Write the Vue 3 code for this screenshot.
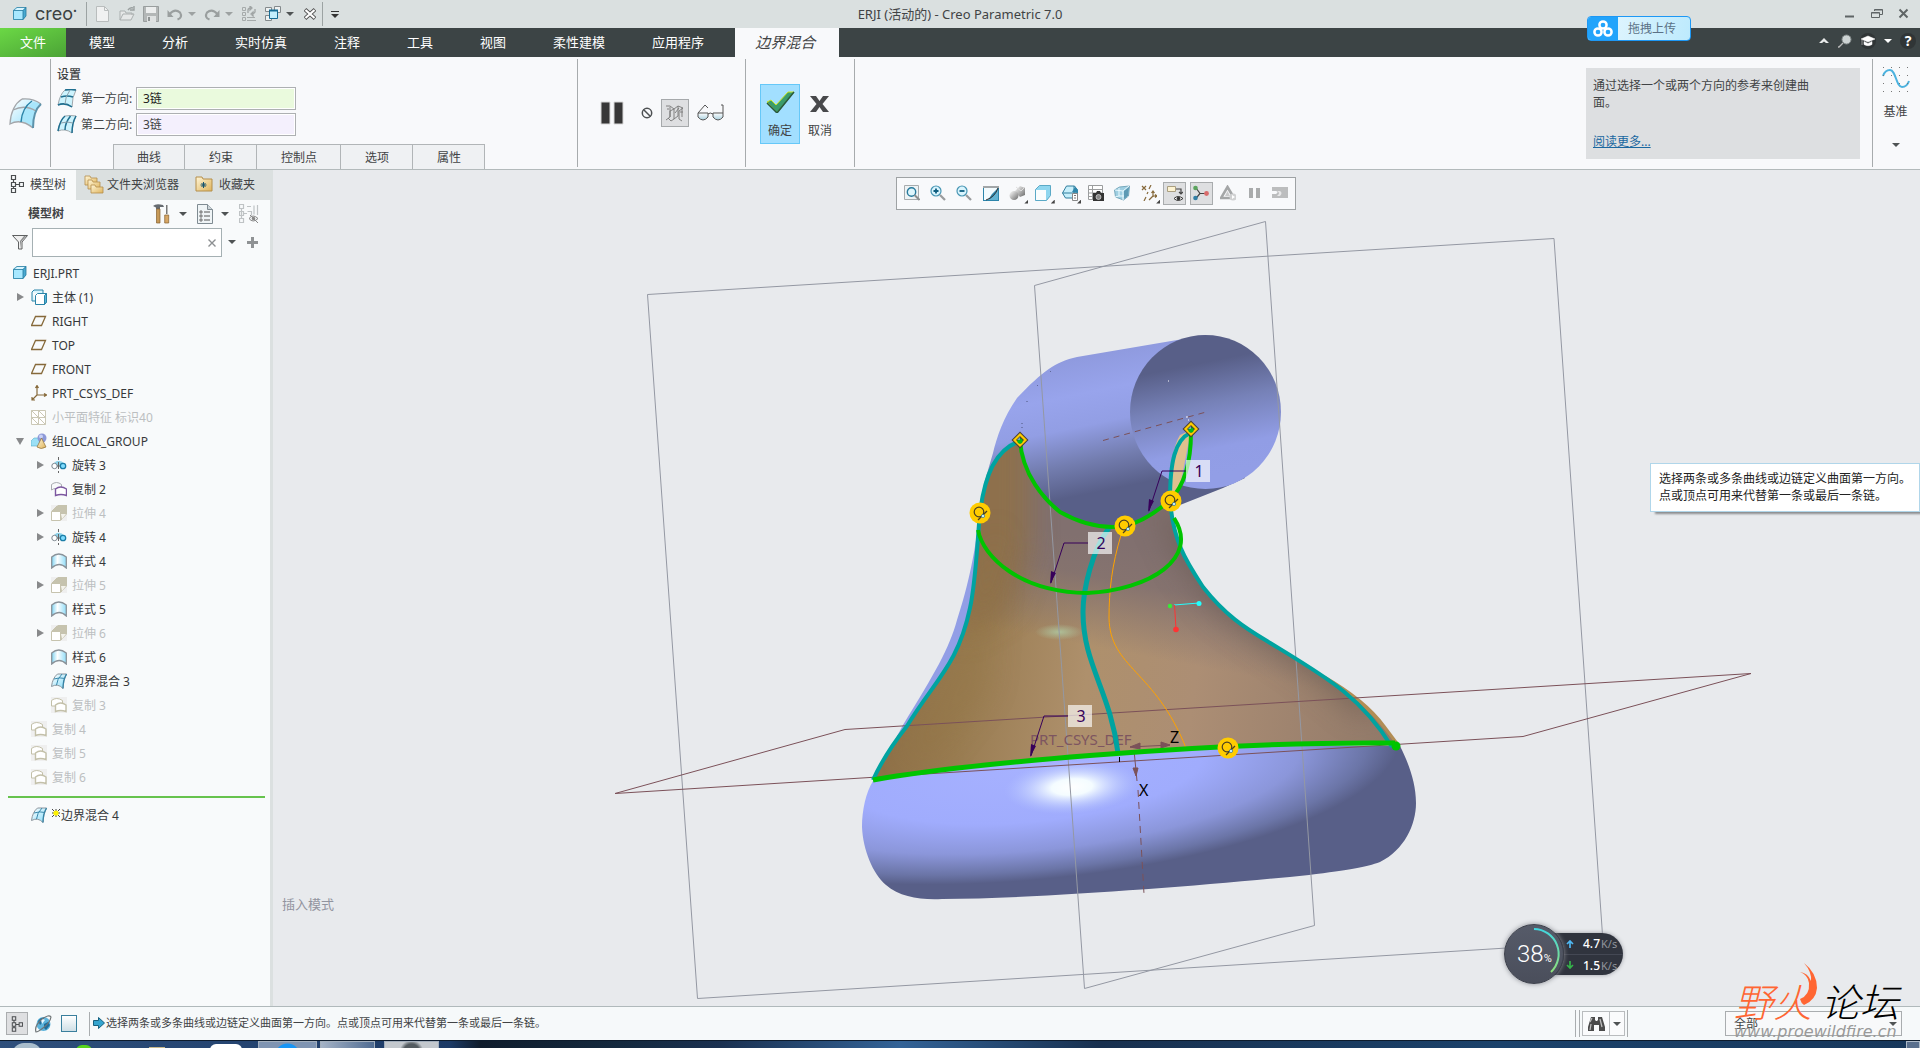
<template>
  <div class="app">
    <!-- icon sprite -->
    <svg class="sprite" aria-hidden="true">
      <defs>
        <linearGradient id="g-sky" x1="0" x2="1" y1="0" y2="1"><stop offset="0" stop-color="#fff" /><stop offset="1" stop-color="#86dcfa" /></linearGradient>
        <linearGradient id="g-style" x1="0" x2="1"><stop offset="0" stop-color="#7fd4f3" /><stop offset=".4" stop-color="#fff" /><stop offset="1" stop-color="#8fdcf8" /></linearGradient>
        <linearGradient id="g-gold" x1="0" x2="1" y1="0" y2="1"><stop offset="0" stop-color="#fff6d8" /><stop offset="1" stop-color="#dfb45c" /></linearGradient>
        <linearGradient id="g-gray" x1="0" x2="1" y1="0" y2="1"><stop offset="0" stop-color="#fff" /><stop offset="1" stop-color="#6a6a6a" /></linearGradient>

        <symbol id="i-cube" viewBox="0 0 16 16">
          <path d="M1 4l4-3h9v9l-3 4H1z" fill="#49a9d0" />
          <path d="M1 4h10v10H1z" fill="#a8e8ff" /><path d="M1 4l4-3h9l-3 3z" fill="#d8f5ff" />
          <path d="M1.500 4.500h9.500v9h-9.500zM1.500 4.500l3.500-3h9v8.500l-3 3.500M11 4.500l3-3" fill="none" stroke="#247a9f" stroke-width=".800" />
        </symbol>
        <symbol id="i-body" viewBox="0 0 16 16">
          <path d="M1 3l2-2h9v4M1 3v9h3" fill="#d6f4fd" stroke="#2a84a8" />
          <path d="M4.500 6.500l2-2h9v8.500l-2 2.500h-9z" fill="#fff" stroke="#2a84a8" />
          <path d="M13.500 6.500l2-2v8.500l-2 2.500z" fill="#57b6d9" stroke="#2a84a8" />
        </symbol>
        <symbol id="i-plane" viewBox="0 0 16 16"><path d="M4.500 3.500h10l-4 9h-10z" fill="none" stroke="#86693a" stroke-width="1.300" /></symbol>
        <symbol id="i-csys" viewBox="0 0 16 16">
          <path d="M6 1v9h9M6 10l-5 5M4.500 3L6 .500 7.500 3M13 8.500l2.500 1.500-2.500 1.500M1 12v3h3" fill="none" stroke="#86693a" stroke-width="1.200" />
        </symbol>
        <symbol id="i-facet" viewBox="0 0 16 16"><path d="M.500 1.500h14v14h-14zM7.500 1.500v14M.500 8.500h14M.500 1.500l14 14M7.500 1.500l7 7M.500 8.500l7 7" fill="#fff" stroke="#cbc8b6" /></symbol>
        <symbol id="i-group" viewBox="0 0 16 16">
          <path d="M0 8l3-3h6v6l-2 2H0z" fill="#9be0f6" stroke="#55adc9" stroke-width=".600" />
          <circle cx="11" cy="5" r="4.500" fill="#8d99d8" /><circle cx="10" cy="3.500" r="2" fill="#c9d1f6" />
          <path d="M10.500 5l4.500 9q-5 3-9 0z" fill="url(#g-gold)" stroke="#8d6b34" stroke-width=".700" />
        </symbol>
        <symbol id="i-revolve" viewBox="0 0 16 16">
          <path d="M3 6q5-5 11 1l-3 3-3-2-3 2-4-2z" fill="#8fd3ea" />
          <circle cx="3.500" cy="9" r="2.700" fill="#fff" stroke="#7d8790" /><circle cx="12" cy="9" r="2.700" fill="#7fdcff" stroke="#1c7ea8" stroke-width="1.300" />
          <path d="M7.500 0v3M7.500 5v7M7.500 14v2M6 9h3" stroke="#666" />
        </symbol>
        <symbol id="i-copy" viewBox="0 0 16 16">
          <path d="M.500 9V3.500q5-4 10 0V6M.500 9q2-1.500 4-1.500" fill="none" stroke="#a9acb1" />
          <path d="M4.500 14.500V8q5-4 11 0v6.500q-5.500-2-11 0z" fill="#fff" stroke="#7c57a0" stroke-width="1.400" />
        </symbol>
        <symbol id="i-copy-off" viewBox="0 0 16 16">
          <path fill="#efefef" d="M0 0h16v16H0z" />
          <path d="M.500 9V3.500q5-4 11 0V6L4 9z" fill="#fff" stroke="#c3c0a9" />
          <path d="M4.500 14.500V8q5-4 10.500 0v6.500q-5.500-2-10.500 0z" fill="#fff" stroke="#c3c0a9" stroke-width="1.400" />
        </symbol>
        <symbol id="i-extrude-off" viewBox="0 0 16 16">
          <path fill="#efefef" d="M0 0h16v16H0z" /><path d="M1 6l6-6h9v9l-6 6z" fill="#c6c3ae" />
          <path d="M.500 6.500h9v9h-9zM1 6l5-5M10 15l5-6" fill="#fff" stroke="#c6c3ae" />
          <path d="M10 9h5l-4 5z" fill="#f4f3ec" />
        </symbol>
        <symbol id="i-style" viewBox="0 0 16 16"><path d="M.700 15V4q7-6 14.600 0v11q-7-7-14.600 0z" fill="url(#g-style)" stroke="#8a9299" stroke-width="1.300" /></symbol>
        <symbol id="i-blend" viewBox="0 0 16 16">
          <path d="M.500 13.500Q1.500 5 6.500 1h9Q12 7 12 15.500 7 10 .500 13.500z" fill="url(#g-sky)" stroke="#8d959c" />
          <path d="M11 1Q6 6 5.500 12M3 6q6-2 11-.500" fill="none" stroke="#3a89ac" />
          <path d="M15.500 1Q12 7 12 15.500" fill="none" stroke="#3784a6" stroke-width="1.300" />
        </symbol>
        <symbol id="i-blend-big" viewBox="0 0 33 31">
          <path d="M1 26Q2 8 13 1q11-1 19 5-8 7-8 24Q12 20 1 26z" fill="url(#g-sky)" />
          <path d="M24 4Q14 12 12 23q7 1 12 7 0-16 8-24-4-2-8-2z" fill="#a8e6fb" />
          <path d="M13 1Q2 8 1 26q11-6 23 4M13 1q11-1 19 5M4 12q12-6 23 1" fill="none" stroke="#a3a6aa" stroke-width="1.300" />
          <path d="M23 3Q13 10 12 24" fill="none" stroke="#2a84a8" stroke-width="1.500" /><path d="M32 6q-8 7-8 24" fill="none" stroke="#5d93ab" stroke-width="2" />
        </symbol>
        <symbol id="i-dir1" viewBox="0 0 20 19">
          <path d="M1 16Q3 5 8 1q6-1 11 0-4 7-4 17Q8 13 1 16z" fill="#cdf3fd" stroke="#a0a7ac" />
          <path d="M8 1q6-1 11 0M4 8q6-2 12 0M1 16q7-3 14 2" fill="none" stroke="#1f6f90" stroke-width="1.500" /><path d="M13 1Q8 8 8 15" fill="none" stroke="#8da0aa" />
        </symbol>
        <symbol id="i-dir2" viewBox="0 0 20 19">
          <path d="M1 16Q3 5 8 1q6-1 11 0-4 7-4 17Q8 13 1 16z" fill="#cdf3fd" stroke="#a0a7ac" />
          <path d="M8 1Q3 5 1 16M13.500 1Q8 8 8 15M19 1q-4 7-4 17" fill="none" stroke="#1f6f90" stroke-width="1.500" /><path d="M4 8q6-2 12 0" fill="none" stroke="#8da0aa" />
        </symbol>
        <symbol id="i-new" viewBox="0 0 16 16"><path d="M1.500.500h8l4 4v11h-12z" fill="#f0f1f1" stroke="#b9bdbd" /><path d="M9.500.500v4h4" fill="none" stroke="#b9bdbd" /></symbol>
        <symbol id="i-open" viewBox="0 0 16 16"><path d="M1 14V5h5l1 2h6v2M1 14l3-6h11l-3 6z" fill="#e6e8e8" stroke="#abb0b0" /><path d="M9 4q2-3 5-2M15 0v4h-4" fill="none" stroke="#9aa0a0" stroke-width="1.400" /></symbol>
        <symbol id="i-save" viewBox="0 0 16 16"><path d="M.500.500h15v15h-15z" fill="#b3b7b7" stroke="#999e9e" /><path d="M3 1h10v6H3z" fill="#eceeee" /><path d="M4 10h9v6H4z" fill="#dfe2e2" /><path d="M5 11h2v4H5z" fill="#8d9292" /></symbol>
        <symbol id="i-undo" viewBox="0 0 16 16"><path d="M2.500 8Q8 2 13 6.500q3 5-2.500 7" fill="none" stroke="#9a9f9f" stroke-width="2.200" /><path d="M.500 4v7h6z" fill="#9a9f9f" /></symbol>
        <symbol id="i-redo" viewBox="0 0 16 16"><path d="M13.500 8Q8 2 3 6.500q-3 5 2.500 7" fill="none" stroke="#9a9f9f" stroke-width="2.200" /><path d="M15.500 4v7h-6z" fill="#9a9f9f" /></symbol>
        <symbol id="i-regen" viewBox="0 0 16 16"><path d="M1.500 1.500h3v3h-3zM1.500 6.500h3v3h-3zM1.500 11.500h3v3h-3zM6 11.500h8M6 14.500h9" fill="none" stroke="#a6abab" /><path d="M7 7V4q0-2 3-2M9 0v4l2-2zM14 3v3q-1 2-3 2M12 6v4l-2-2z" fill="none" stroke="#a0a5a5" stroke-width="1.300" /></symbol>
        <symbol id="i-windows" viewBox="0 0 16 16"><path d="M.500 1.500h6v4h-6zM9.500.500h6v6h-6zM.500 9.500h6v5h-6z" fill="#eef1f1" stroke="#848a8c" /><path d="M4.500 4.500h8v8h-8z" fill="#c4effd" stroke="#176c94" /><path d="M4 4.500h9" stroke="#176c94" stroke-width="2" /></symbol>
        <symbol id="i-closewin" viewBox="0 0 12 12"><path d="M1 1.500l10 9M11 1.500l-10 9" stroke="#555" stroke-width="4" /><path d="M1.500 2l9 8M10.500 2l-9 8" stroke="#fff" stroke-width="2.200" /></symbol>
        <symbol id="i-tree" viewBox="0 0 14 20"><path d="M1.500 1.500h4v4h-4zM1.500 8.500h4v4h-4zM1.500 14.500h4v4h-4zM9.500 8.500h4v4h-4zM3.500 5.500v3M3.500 12.500v2M5.500 10.500h4" fill="none" stroke="#4b4e50" stroke-width="1.200" /></symbol>
        <symbol id="i-folders" viewBox="0 0 20 20">
          <path d="M1 2h5l1 2h6v7H1z" fill="url(#g-gold)" stroke="#b48e4b" stroke-width=".800" />
          <path d="M4 6h4l1 2h7v7H4z" fill="url(#g-gold)" stroke="#b48e4b" stroke-width=".800" />
          <path d="M7 11h4l1 2h7v6H7z" fill="url(#g-gold)" stroke="#b48e4b" stroke-width=".800" />
        </symbol>
        <symbol id="i-fav" viewBox="0 0 18 16"><path d="M1 1h6l1 2h9v12H1z" fill="url(#g-gold)" stroke="#b48e4b" /><path d="M8.500 6v6M5.500 9h6M6.500 7l4 4M10.500 7l-4 4" stroke="#17556f" /></symbol>
        <symbol id="i-tools" viewBox="0 0 18 20"><path d="M0 2q3-3 10-1l1 2H7v2H3V3.500z" fill="#666b70" /><path d="M3.500 5h3.500v14h-3.500z" fill="#c79a58" stroke="#85602e" stroke-width=".700" /><path d="M13 1h1.500v9H13z" fill="#777" /><path d="M11.700 11h4v8h-4z" fill="#d7a765" stroke="#85602e" stroke-width=".700" /></symbol>
        <symbol id="i-list" viewBox="0 0 16 20"><path d="M.500.500h10l5 5v14H.500z" fill="#eff4f6" stroke="#7f8b92" /><path d="M10.500.500v5h5" fill="#cdd5d9" stroke="#7f8b92" /><path d="M3 7h2v2H3zM3 11h2v2H3zM3 15h2v2H3z" fill="none" stroke="#555" stroke-width=".800" /><path d="M7 8h6M7 12h6M7 16h6" stroke="#555" /></symbol>
        <symbol id="i-tree-eye" viewBox="0 0 20 20"><path d="M.500.500h4v4h-4zM.500 7.500h4v4h-4zM.500 14.500h4v4h-4zM2.500 5v10M5 9.500h3M8.500 7.500h4v4M8 2.500h4M15 1.500v9M18.500 1v10" fill="none" stroke="#bfc3c5" stroke-width="1.200" /><path d="M10 14.500q4-5 9 0-5 5-9 0z" fill="#eef0f1" stroke="#888" /><circle cx="14.500" cy="14.500" r="1.700" fill="#888" /><path d="M11 11l8 8" stroke="#888" /></symbol>
        <symbol id="i-funnel" viewBox="0 0 16 15"><path d="M.500.500h15L10 7v7H6.500V7z" fill="#f0f0f0" stroke="#5e6061" /><path d="M9 7l5-6h-2L8 6v8z" fill="#8b8d8e" /></symbol>

        <!-- view toolbar -->
        <symbol id="v-fit" viewBox="0 0 16 16"><path d="M.500.500h14v14h-14z" fill="#eef3f5" stroke="#a8acae" /><circle cx="7.500" cy="7" r="4.200" fill="#dff6fd" stroke="#287a9c" stroke-width="1.400" /><path d="M10.500 10l5 5" stroke="#8c8f90" stroke-width="2" /></symbol>
        <symbol id="v-in" viewBox="0 0 16 16"><circle cx="6" cy="6" r="5" fill="#d9f4fd" stroke="#4896b4" stroke-width="1.200" /><path d="M3.500 6h5M6 3.500v5" stroke="#0e5e80" stroke-width="1.800" /><path d="M10 10l5 5" stroke="#9a9c9e" stroke-width="2.300" /></symbol>
        <symbol id="v-out" viewBox="0 0 16 16"><circle cx="6" cy="6" r="5" fill="#d9f4fd" stroke="#4896b4" stroke-width="1.200" /><path d="M3.500 6h5" stroke="#0e5e80" stroke-width="1.800" /><path d="M10 10l5 5" stroke="#9a9c9e" stroke-width="2.300" /></symbol>
        <symbol id="v-repaint" viewBox="0 0 16 16"><path d="M0 1h16v15H0z" fill="#2d85ab" /><path d="M1 3h14L9 9 5 15H1z" fill="#f3fbfe" /><path d="M15 3v12H5q7-3 10-12z" fill="#63b3d2" /><path d="M3 15q9-3 12-12" fill="none" stroke="#333" /><path d="M0 1h16v2H0z" fill="#a2a6a8" /></symbol>
        <symbol id="v-shade" viewBox="0 0 16 16"><path d="M6 6l5-5 5 2v7l-5 2z" fill="url(#g-gray)" /><path d="M7 2l5 4 4-4" fill="none" stroke="#ddd" /><circle cx="5" cy="10.500" r="4.500" fill="url(#g-gray)" /></symbol>
        <symbol id="v-box" viewBox="0 0 16 16"><path d="M.500 4.500l4-4h11v10l-4 5h-11z" fill="#8fd6ef" stroke="#5ba9c6" /><path d="M1 5h10v10H1z" fill="#fafdfe" /></symbol>
        <symbol id="v-views" viewBox="0 0 16 16"><path d="M.500 8l4-7h8l3 4v8h-12z" fill="#c7effb" stroke="#317d9c" /><path d="M.500 8h15M12 1v8" fill="none" stroke="#317d9c" /><path d="M10 7l3-5 3 3v3z" fill="#2f86ab" /><path d="M10.500 8.500h5v7h-5z" fill="#fff" stroke="#888" /><path d="M12 10.500h2M12 13h2" stroke="#777" /></symbol>
        <symbol id="v-camera" viewBox="0 0 16 16"><path d="M.500.500h14v14h-14zM.500 4.500h14M.500 8h14M.500 11.500h14M4.500.500v14" fill="#fff" stroke="#9b9d9e" /><path d="M5 8h3l1-2h3l1 2h3v8H5z" fill="#333" /><circle cx="10.500" cy="12" r="2.500" fill="#888" stroke="#ddd" stroke-width=".700" /></symbol>
        <symbol id="v-persp" viewBox="0 0 16 16"><path d="M.500 5l5-3 10-1-1 10-5 4-8-3z" fill="#9fcfe2" stroke="#78a9bd" /><path d="M1 5l8 1 6-5M9 6v9M5 3v8l-4 1M5 11l9 0" fill="none" stroke="#eafaff" /><path d="M10 6l5-4-1 9-4 3z" fill="#5d9ab4" /></symbol>
        <symbol id="v-datum" viewBox="0 0 16 16"><path d="M1 1l4 4M5 1L1 5M10 0L8 4M7 7l-1 2M5 12l-2 4M12 6v6M12 11h4M12 11l-4 4M10.500 8L12 6l1.500 2M14 9.500l2 1.500-2 1.500" fill="none" stroke="#86693a" stroke-width="1.200" /></symbol>
        <symbol id="v-annot" viewBox="0 0 16 16"><path d="M.500 1.500h8v5h-8z" fill="#fdf3d2" stroke="#a99e80" /><path d="M9 4h5v5M12 7l2 2 2-2" fill="none" stroke="#444" stroke-width="1.200" /><path d="M7 13.500q4-4 9 0-5 4-9 0z" fill="#fff" stroke="#333" /><circle cx="11.500" cy="13.500" r="1.800" fill="#333" /></symbol>
        <symbol id="v-spin" viewBox="0 0 16 16"><path d="M3 3l4 5.500L2.500 14M7 8.500h6" fill="none" stroke="#444" stroke-width="1.200" /><circle cx="2.500" cy="3" r="2.300" fill="#5aa35d" /><circle cx="2.500" cy="13" r="2.300" fill="#337fa6" /><circle cx="13.500" cy="8.500" r="2.400" fill="#d96b6b" /></symbol>
        <symbol id="v-tri" viewBox="0 0 16 16"><path d="M7.500 2L14 13H1z" fill="none" stroke="#a4a6a7" stroke-width="2.600" /><path d="M7.500 6l2.500 5H5z" fill="#c9cacb" /><circle cx="13" cy="12" r="3.500" fill="#d0d1d2" /><path d="M12 10l3 2-3 2z" fill="#fff" /></symbol>
        <symbol id="v-pause" viewBox="0 0 16 16"><path d="M3 3h4v10H3zM10 3h4v10h-4z" fill="#a9abac" /></symbol>
        <symbol id="v-play" viewBox="0 0 16 16"><path d="M0 2h16v11H0V9h4q3-2 0-3H0z" fill="#bcbdbe" /><path d="M5 6q4 2 0 5h3q3-3 0-5z" fill="#e7e7e8" /></symbol>
        <symbol id="i-globe" viewBox="0 0 17 18"><circle cx="8.500" cy="9" r="7" fill="#5db4dc" /><path d="M3 6q3-4 6-3l-1 4-3 3zM9 9l4-2 2 3-4 5-2-2z" fill="#1f6f9c" /><path d="M6 5q1-2 4 0l-3 4z" fill="#e8f8ff" /><path d="M1 17Q-1 11 7 4q7-5 9-2-1 6-8 11-5 4-7 4z" fill="none" stroke="#6f7577" stroke-width="1.200" /></symbol>
        <symbol id="i-bino" viewBox="0 0 17 16"><path d="M3 1h4v3l1 1h1l1-1V1h4l3 10v4h-6V9H6v6H0v-4z" fill="#4b4b4b" /><path d="M2 6l2-4M12 3l2 8M3 8l-1 6" stroke="#bbb" stroke-width="1.300" /></symbol>
      </defs>
    </svg>

    <header class="titlebar">
      <svg class="titlebar__logo"><use href="#i-cube" /></svg>
      <span class="titlebar__brand">creo<sup>•</sup></span>
      <i class="titlebar__sep"></i>
      <button v-for="b in quickTools" :key="b.icon" class="quick" :aria-label="b.label">
        <svg class="ico"><use :href="'#' + b.icon" /></svg>
        <i v-if="b.menu" class="caret" :class="'caret--' + b.menu"></i>
      </button>
      <button class="quick quick--x" aria-label="关闭"><svg class="ico ico--12"><use href="#i-closewin" /></svg></button>
      <i class="titlebar__sep titlebar__sep--end"></i>
      <button class="quick quick--more" aria-label="自定义"><i class="caret caret--bar"></i></button>
      <h1 class="titlebar__title">ERJI (活动的) - Creo Parametric 7.0</h1>
      <div class="titlebar__win">
        <button aria-label="最小化"><svg width="12" height="12"><path d="M1 8.500h9" stroke="#5f6566" stroke-width="2" /></svg></button>
        <button aria-label="还原"><svg width="12" height="12"><path d="M3.500 3V1.500h8v5H9M.500 4.500h8v5h-8zM.500 5h8M3.500 2h8" fill="none" stroke="#5f6566" /></svg></button>
        <button aria-label="关闭窗口"><svg width="12" height="12"><path d="M1.500 1.500l8 8M9.500 1.500l-8 8" stroke="#5f6566" stroke-width="2" /></svg></button>
      </div>
    </header>

    <nav class="tabs">
      <button class="tabs__file">文件</button>
      <button v-for="t in ribbonTabs" :key="t" class="tabs__tab">{{ t }}</button>
      <button class="tabs__tab tabs__tab--active">边界混合</button>
      <div class="tabs__right">
        <button aria-label="折叠"><svg width="12" height="8"><path d="M1 6l5-5 5 5H8L6 4.500 4 6z" fill="#e8eaea" /></svg></button>
        <button aria-label="搜索"><svg width="14" height="14"><circle cx="8.500" cy="5.500" r="4.500" fill="#cdd3d3" stroke="#838a8a" /><path d="M5 9l-4 4h-1" fill="none" stroke="#bbb" stroke-width="1.300" /></svg></button>
        <button aria-label="学习"><svg width="16" height="16"><circle cx="8" cy="8" r="8" fill="#303536" /><path d="M1 6l7-3 7 3-7 3zM4 8.500v3q4 2.500 8 0v-3l-4 2zM2 7v5" fill="#fff" stroke="#fff" stroke-width=".500" /></svg></button>
        <i class="caret caret--white"></i>
        <button class="tabs__help" aria-label="帮助">?</button>
      </div>
    </nav>

    <section class="ribbon">
      <div class="ribbon__type"><svg width="33" height="31"><use href="#i-blend-big" /></svg></div>
      <div class="ribbon__settings">
        <p class="ribbon__heading">设置</p>
        <div class="field">
          <svg width="20" height="19"><use href="#i-dir1" /></svg>
          <label for="dir1">第一方向:</label>
          <input id="dir1" v-model="dir1" class="field__input field__input--green" type="text" />
        </div>
        <div class="field">
          <svg width="20" height="19"><use href="#i-dir2" /></svg>
          <label for="dir2">第二方向:</label>
          <input id="dir2" v-model="dir2" class="field__input field__input--violet" type="text" />
        </div>
        <div class="ribbon__panels">
          <button v-for="p in panels" :key="p" class="panel-tab">{{ p }}</button>
        </div>
      </div>
      <div class="ribbon__preview">
        <button aria-label="暂停"><svg width="24" height="24"><path d="M1 1h9v22H1zM14 1h9v22h-9z" fill="#373737" stroke="#d8d8d8" /></svg></button>
        <button class="gap-l" aria-label="无预览"><svg width="12" height="12"><circle cx="6" cy="6" r="4.700" fill="none" stroke="#4d5052" stroke-width="1.500" /><path d="M2.500 2.500l7 7" stroke="#4d5052" stroke-width="1.500" /></svg></button>
        <button class="mesh" aria-label="分离"><svg width="20" height="18"><path d="M1 2h4l4 3-4 2M1 16l4-3V3M5 7v6M9 5v10l-3 2-3-3M9 5l4-3v10l-4 3M13 2l5 2-4 3v8l3 2M17 4v9M2 5h2M15 8h3M10 9l4-5" fill="none" stroke="#777" stroke-width=".900" /></svg></button>
        <button aria-label="检查"><svg width="28" height="18"><path d="M1 9h10v4q-5 6-10 0zM16 9h10v4q-5 6-10 0z" fill="url(#g-lens)" stroke="#555" /><path d="M11 10q2-2 5 0M1 9l7-8 3 3M26 9V1l-2 0" fill="none" stroke="#555" /><defs><linearGradient id="g-lens" x2="0" y2="1"><stop offset="0" stop-color="#fff" /><stop offset="1" stop-color="#a9d0de" /></linearGradient></defs></svg></button>
      </div>
      <div class="ribbon__confirm">
        <button class="confirm confirm--ok">
          <svg width="30" height="24"><path d="M2 13l4-2 5 5L23 3h6L12 24z" fill="#3b9c6a" stroke="#cde522" /><path d="M2 14l10 10L29 3" fill="none" stroke="#27583d" stroke-width="1.500" /></svg>
          <span>确定</span>
        </button>
        <button class="confirm">
          <svg width="30" height="24"><path d="M5 7h6l3.500 5L18 7h6l-6.500 8 6.500 8h-6l-3.500-5-3.500 5H5l6.500-8z" fill="#48494b" /></svg>
          <span>取消</span>
        </button>
      </div>
      <div class="ribbon__help">
        <p>通过选择一个或两个方向的参考来创建曲面。</p>
        <a href="#more">阅读更多...</a>
      </div>
      <button class="ribbon__datum">
        <svg width="28" height="28">
          <path d="M1 10q2-6 7-6c6 0 6 17 12 17q5 0 7-6" fill="none" stroke="#4bb2df" stroke-width="2" />
          <path d="M1 1.500h26M1 9.500h26M1 17.500h26M1 25.500h26" stroke="#777" stroke-dasharray="1 7" />
        </svg>
        <span>基准</span>
        <i class="caret caret--dark"></i>
      </button>
    </section>

    <main class="work">
      <aside class="side">
        <div class="side__tabs">
          <button class="side__tab side__tab--active"><svg width="14" height="20"><use href="#i-tree" /></svg>模型树</button>
          <button class="side__tab side__tab--folders"><svg width="20" height="20"><use href="#i-folders" /></svg>文件夹浏览器</button>
          <button class="side__tab side__tab--fav"><svg width="18" height="16"><use href="#i-fav" /></svg>收藏夹</button>
        </div>
        <div class="side__head">
          <strong>模型树</strong>
          <button aria-label="设置"><svg width="18" height="20"><use href="#i-tools" /></svg><i class="caret caret--dark"></i></button>
          <button aria-label="显示"><svg width="16" height="20"><use href="#i-list" /></svg><i class="caret caret--dark"></i></button>
          <button aria-label="可见性"><svg width="20" height="20"><use href="#i-tree-eye" /></svg></button>
        </div>
        <div class="side__filter">
          <label for="filter" aria-label="过滤"><svg width="16" height="15"><use href="#i-funnel" /></svg></label>
          <div class="side__search">
            <input id="filter" v-model="filter" type="text" />
            <button aria-label="清除" @click="filter = ''"><svg width="8" height="8"><path d="M.500.500l7 7M7.500.500l-7 7" stroke="#8d9092" stroke-width="1.400" /></svg></button>
          </div>
          <i class="caret caret--dark"></i>
          <button aria-label="添加"><svg width="11" height="11"><path d="M5.500 0v11M0 5.500h11" stroke="#8f9294" stroke-width="3" /></svg></button>
        </div>
        <ul class="tree">
          <li v-for="(n, i) in nodes" :key="i" class="tree__row" :class="['tree__row--l' + n.level, { 'tree__row--off': n.off }]">
            <i class="tree__arrow" :class="n.arrow && 'tree__arrow--' + n.arrow"></i>
            <svg class="ico"><use :href="'#' + n.icon" /></svg>
            <span>{{ n.name }}</span>
          </li>
          <li class="tree__insert"></li>
          <li class="tree__row tree__row--l1">
            <i class="tree__arrow"></i>
            <svg class="ico"><use href="#i-blend" /></svg>
            <svg width="8" height="8"><path d="M0 0l8 8M8 0L0 8M4 0v8M0 4h8" stroke="#444" /><circle cx="4" cy="4" r="2.600" fill="#fff200" /></svg>
            <span class="tree__new">边界混合 4</span>
          </li>
        </ul>
      </aside>

      <section class="view">
        <svg class="scene" viewBox="273 170 1647 836">
          <defs>
            <linearGradient id="s-tube" gradientUnits="userSpaceOnUse" x1="1080" y1="345" x2="1112" y2="502">
              <stop offset="0" stop-color="#8c97da" /><stop offset=".3" stop-color="#98a4ec" /><stop offset=".5" stop-color="#929ee4" /><stop offset=".72" stop-color="#737daf" /><stop offset=".92" stop-color="#585f88" />
            </linearGradient>
            <linearGradient id="s-open" gradientUnits="userSpaceOnUse" x1="1190" y1="345" x2="1216" y2="475">
              <stop offset="0" stop-color="#585f88" /><stop offset=".15" stop-color="#585f88" /><stop offset=".45" stop-color="#7681b7" /><stop offset=".8" stop-color="#919de5" /><stop offset="1" stop-color="#929ee6" />
            </linearGradient>
            <radialGradient id="s-base" gradientUnits="userSpaceOnUse" cx="0" cy="0" r="1" gradientTransform="translate(1025 770) rotate(-5) scale(395 116)">
              <stop offset="0" stop-color="#a6b1ff" /><stop offset=".45" stop-color="#a0acfd" /><stop offset=".7" stop-color="#8b96da" /><stop offset=".87" stop-color="#6b75a7" /><stop offset=".95" stop-color="#585f88" />
            </radialGradient>
            <radialGradient id="s-shine"><stop offset="0" stop-color="#fff" /><stop offset=".3" stop-color="#f4fcff" /><stop offset="1" stop-color="#b4c4ff" stop-opacity="0" /></radialGradient>
            <radialGradient id="s-glint"><stop offset="0" stop-color="#aebf98" /><stop offset="1" stop-color="#aebf98" stop-opacity="0" /></radialGradient>
            <linearGradient id="s-skin" gradientUnits="userSpaceOnUse" x1="900" y1="650" x2="1390" y2="720">
              <stop offset="0" stop-color="#8f7148" /><stop offset=".14" stop-color="#997c51" /><stop offset=".38" stop-color="#ae906c" /><stop offset=".6" stop-color="#ac8e74" /><stop offset="1" stop-color="#927a6a" />
            </linearGradient>
            <linearGradient id="s-neck" gradientUnits="userSpaceOnUse" x1="1105" y1="540" x2="1085" y2="645">
              <stop offset="0" stop-color="#81706f" /><stop offset=".35" stop-color="#81706f" stop-opacity=".9" /><stop offset="1" stop-color="#81706f" stop-opacity="0" />
            </linearGradient>
            <clipPath id="c-skin"><path :d="skin" /></clipPath>
            <filter id="f-soft" x="-50%" y="-50%" width="200%" height="200%"><feGaussianBlur stdDeviation="14" /></filter>
            <g id="m-tangent">
              <circle r="10.500" fill="#fc0" /><circle cx="-1" cy="-1" r="4.800" fill="none" stroke="#4a4022" stroke-width="1.200" /><path d="M-2 7L7-2" stroke="#4a4022" stroke-width="1.200" /><circle cx="3" cy="3" r="1.600" fill="#d5f6ff" stroke="#2d7292" stroke-width=".700" />
            </g>
            <g id="m-end">
              <path d="M0-8.500L8.500 0 0 8.500-8.500 0z" fill="#4a4033" /><path d="M0-5.500L5.500 0 0 5.500-5.500 0z" fill="#4a4033" stroke="#fc0" stroke-width="2.200" /><circle cy="1" r="2.600" fill="#00b81e" /><path d="M-3 0h3v-3z" fill="#72a9b8" />
            </g>
          </defs>

          <!-- tube and elbow -->
          <path d="M1205 335L1183 339 1077 357C1055 362 1043 371 1017 398 1003 418 997 437 993 453 984 483 980 500 977 520L1000 560 1100 600 1175 507 1223 488 1245 478z" fill="url(#s-tube)" />
          <path d="M985 480L981 500C975 560 966 592 957 620 949 649 935 673 903 725L873 781 960 740 1020 600 1000 480z" fill="#929ee6" />
          <ellipse cx="1205.500" cy="412" rx="75.500" ry="77" fill="url(#s-open)" />
          <path d="M1022 428v-8M1027 402v-3M1037 386l2-2M1050 372l2-2" stroke="#4d547c" stroke-dasharray="1 3" />
          <path d="M1168 381h1M1187 416v2M1188 420h1" stroke="#fff" />
          <path d="M1180 435Q1170 450 1170 500L1180 487 1191 430z" fill="#dec08f" />

          <!-- base -->
          <path d="M873 781C866 792 862 810 862 827 863 850 873 874 886 885 900 897 920 900 942 899 1050 898 1200 886 1309 875 1350 870 1366 867 1380 862 1404 850 1416 825 1416 803 1416 782 1408 762 1400 746L1120 745z" fill="url(#s-base)" />
          <ellipse cx="1072" cy="787" rx="68" ry="27" fill="url(#s-shine)" transform="rotate(-4 1072 787)" />

          <!-- blended surface -->
          <path d="M1324 675Q1366 699 1385 725L1400 745H1385z" fill="#b28d54" />
          <g clip-path="url(#c-skin)">
            <path :d="skin" fill="url(#s-skin)" />
            <path d="M860 430h540v360H860z" fill="url(#s-neck)" />
            <path d="M940 400h90v150l-20 60-50 30z" fill="#8f7148" opacity=".9" filter="url(#f-soft)" />
            <path d="M1150 500L1180 565 1215 612 1300 670 1360 718 1400 690 1240 560z" fill="#68584f" opacity=".5" filter="url(#f-soft)" />
            <path d="M1000 520L965 640 900 755 930 765 990 690z" fill="#927444" opacity=".35" filter="url(#f-soft)" />
            <ellipse cx="1059" cy="632" rx="24" ry="8" fill="url(#s-glint)" />
          </g>

          <!-- datum planes and axes -->
          <g fill="none" stroke="#9498a3">
            <path d="M647.500 294.500L1554 238.500 1603 942 697.500 998.500z" /><path d="M1034.500 285.500L1265.500 221.500 1314.500 925.500 1084.500 988.500z" />
          </g>
          <g fill="none" stroke="#7b5159">
            <path d="M615 793.500L845 729.500 1751 673.500 1523 736.500z" />
            <path d="M1103 440.500L1208 411.500" stroke-dasharray="6 5" />
            <path d="M1138 790L1144 894" stroke-dasharray="7 5" />
            <path d="M1130 747L1170 745M1134 750L1137 781" />
            <path d="M1130 747l10-4v6zM1170 745l-9-3v6zM1136 776l-3-8h5z" fill="#7b5159" />
          </g>
          <text x="1030" y="745" class="scene__csys">PRT_CSYS_DEF</text>

          <!-- boundary chains -->
          <g fill="none" stroke="#00a3a0" stroke-width="4">
            <path d="M1020 441C995 450 985 475 980 512 977 545 976 580 970 608 958 665 935 680 907 726 892 745 882 760 873 780" />
            <path d="M1190 433C1175 440 1170 462 1170 500 1173 540 1185 560 1203 587 1225 615 1245 628 1267 641 1324 676 1360 695 1392 747" />
            <path d="M1109 528C1092 550 1083 590 1083 612 1083 665 1110 690 1118 753" stroke-width="5" />
          </g>
          <path d="M1121 535C1112 565 1109 590 1109 618 1110 668 1155 670 1186 748" fill="none" stroke="#ffa200" />
          <g fill="none" stroke="#00c400" stroke-width="4">
            <path d="M1020 440C1022 475 1045 500 1060 512 1085 526 1105 529 1125 526 1145 521 1160 509 1170 500 1185 485 1191 463 1191 432" />
            <path d="M978 530C983 557 1020 592 1087 593 1150 590 1200 558 1174 518" />
            <path d="M873 780C950 766 1200 741 1395 743" stroke-width="5" />
          </g>
          <circle cx="1396" cy="746" r="4.500" fill="#00c400" />

          <use href="#m-end" x="1020" y="440" /><use href="#m-end" x="1191" y="429" />
          <use v-for="m in markers" :key="m.x" href="#m-tangent" :x="m.x" :y="m.y" />

          <g v-for="c in chainTags" :key="c.n">
            <path :d="`M${c.x} ${c.y + 11}h-24l-13 40`" fill="none" stroke="#37005a" />
            <path :d="`M${c.x - 38} ${c.y + 52}l1-13 5 2z`" fill="#37005a" />
            <rect :x="c.x" :y="c.y" width="24" height="22" fill="#fff" fill-opacity=".65" />
            <text :x="c.x + 13" :y="c.y + 17" class="scene__tag">{{ c.n }}</text>
          </g>

          <path d="M1174 605L1199 603" stroke="#2ff" /><path d="M1174.500 605L1176 629" stroke="#f33" />
          <circle cx="1170" cy="606" r="2.200" fill="#3e3" /><circle cx="1199" cy="603.500" r="2.500" fill="#2ff" /><circle cx="1176" cy="629.500" r="2.800" fill="#f33" />
          <text x="1170" y="743" class="scene__axis">Z</text>
          <text x="1139" y="796" class="scene__axis">X</text>
          <path d="M1119.500 757v5" stroke="#000" />
          <text x="282" y="909" class="scene__mode">插入模式</text>
        </svg>

        <div class="viewbar">
          <button v-for="v in viewTools" :key="v.icon" class="viewbar__btn" :class="{ 'viewbar__btn--on': v.on, 'viewbar__btn--menu': v.menu }" :aria-label="v.label">
            <svg class="ico"><use :href="'#' + v.icon" /></svg>
          </button>
        </div>

        <div class="tip">选择两条或多条曲线或边链定义曲面第一方向。<br />点或顶点可用来代替第一条或最后一条链。</div>

        <div class="meter">
          <div class="meter__speed">
            <p><svg width="8" height="8"><path d="M4 8V1M1 4l3-3 3 3" fill="none" stroke="#4fb8f2" stroke-width="1.700" /></svg><b>4.7</b><small>K/s</small></p>
            <p><svg width="8" height="8"><path d="M4 0v7M1 4l3 3 3-3" fill="none" stroke="#35b44a" stroke-width="1.700" /></svg><b>1.5</b><small>K/s</small></p>
          </div>
          <div class="meter__dial">
            <svg width="60" height="60"><path d="M30 5A25 25 0 0 1 47 48" fill="none" stroke="url(#g-dial)" stroke-width="2" /><defs><linearGradient id="g-dial" x2="0" y2="1"><stop offset="0" stop-color="#41d6df" /><stop offset="1" stop-color="#8fe07c" /></linearGradient></defs></svg>
            <span>38<small>%</small></span>
          </div>
        </div>
      </section>
    </main>

    <footer class="status">
      <button class="status__tree" aria-label="树"><svg width="12" height="18"><use href="#i-tree" /></svg></button>
      <button class="status__globe" aria-label="浏览器"><svg width="17" height="18"><use href="#i-globe" /></svg></button>
      <button class="status__full" aria-label="全屏"></button>
      <i class="status__sep"></i>
      <p class="status__msg">
        <svg width="12" height="12"><path d="M.500 3.500h5v-3L11.500 6l-6 5.500v-3h-5z" fill="#35a5cf" stroke="#17607f" /></svg>选择两条或多条曲线或边链定义曲面第一方向。点或顶点可用来代替第一条或最后一条链。
      </p>
      <div class="status__find">
        <button aria-label="查找"><svg width="17" height="16"><use href="#i-bino" /></svg></button>
        <button class="status__drop" aria-label="查找选项"><i class="caret caret--dark"></i></button>
      </div>
      <div class="status__filter">
        <select v-model="selection" aria-label="选择过滤器"><option>全部</option></select>
        <i class="caret caret--dark"></i>
      </div>
    </footer>

    <div class="taskbar">
      <i class="taskbar__orb"></i><i class="taskbar__green"></i><i class="taskbar__tan"></i><i class="taskbar__white"></i>
      <i class="taskbar__win taskbar__win--blue"></i><i class="taskbar__win"></i><i class="taskbar__win taskbar__win--light"></i>
      <i class="taskbar__show"></i>
    </div>

    <button class="upload">
      <span class="upload__icon"><svg width="20" height="18"><g fill="none" stroke="#fff" stroke-width="2.500"><circle cx="10" cy="5" r="3.600" /><circle cx="5" cy="12" r="3.600" /><circle cx="15" cy="12" r="3.600" /></g></svg></span>
      <span class="upload__text">拖拽上传</span>
    </button>

    <div class="mark">
      <p class="mark__name"><span>野火</span> 论坛</p>
      <svg class="mark__flame" width="20" height="42"><path d="M4 0Q17 10 17 25q-1 12-13 17-3-2-4-6 10-4 9-16Q8 12 0 9q8 1 11 9Q12 9 4 0z" fill="#ff6633" /></svg>
      <p class="mark__url">www.proewildfire.cn</p>
    </div>
  </div>
</template>

<script setup>
import { ref } from 'vue'

const dir1 = ref('3链')
const dir2 = ref('3链')
const filter = ref('')
const selection = ref('全部')

const quickTools = [
  { icon: 'i-new', label: '新建' },
  { icon: 'i-open', label: '打开' },
  { icon: 'i-save', label: '保存' },
  { icon: 'i-undo', label: '撤消', menu: 'off' },
  { icon: 'i-redo', label: '重做', menu: 'off' },
  { icon: 'i-regen', label: '重新生成' },
  { icon: 'i-windows', label: '窗口', menu: 'dark' },
]

const ribbonTabs = ['模型', '分析', '实时仿真', '注释', '工具', '视图', '柔性建模', '应用程序']
const panels = ['曲线', '约束', '控制点', '选项', '属性']

const nodes = [
  { level: 0, icon: 'i-cube', name: 'ERJI.PRT' },
  { level: 1, icon: 'i-body', name: '主体 (1)', arrow: 'right' },
  { level: 1, icon: 'i-plane', name: 'RIGHT' },
  { level: 1, icon: 'i-plane', name: 'TOP' },
  { level: 1, icon: 'i-plane', name: 'FRONT' },
  { level: 1, icon: 'i-csys', name: 'PRT_CSYS_DEF' },
  { level: 1, icon: 'i-facet', name: '小平面特征 标识40', off: true },
  { level: 1, icon: 'i-group', name: '组LOCAL_GROUP', arrow: 'down' },
  { level: 2, icon: 'i-revolve', name: '旋转 3', arrow: 'right' },
  { level: 2, icon: 'i-copy', name: '复制 2' },
  { level: 2, icon: 'i-extrude-off', name: '拉伸 4', arrow: 'right', off: true },
  { level: 2, icon: 'i-revolve', name: '旋转 4', arrow: 'right' },
  { level: 2, icon: 'i-style', name: '样式 4' },
  { level: 2, icon: 'i-extrude-off', name: '拉伸 5', arrow: 'right', off: true },
  { level: 2, icon: 'i-style', name: '样式 5' },
  { level: 2, icon: 'i-extrude-off', name: '拉伸 6', arrow: 'right', off: true },
  { level: 2, icon: 'i-style', name: '样式 6' },
  { level: 2, icon: 'i-blend', name: '边界混合 3' },
  { level: 2, icon: 'i-copy-off', name: '复制 3', off: true },
  { level: 1, icon: 'i-copy-off', name: '复制 4', off: true },
  { level: 1, icon: 'i-copy-off', name: '复制 5', off: true },
  { level: 1, icon: 'i-copy-off', name: '复制 6', off: true },
]

const viewTools = [
  { icon: 'v-fit', label: '重新调整' },
  { icon: 'v-in', label: '放大' },
  { icon: 'v-out', label: '缩小' },
  { icon: 'v-repaint', label: '重画' },
  { icon: 'v-shade', label: '渲染', menu: true },
  { icon: 'v-box', label: '显示样式', menu: true },
  { icon: 'v-views', label: '已保存方向', menu: true },
  { icon: 'v-camera', label: '视图管理器' },
  { icon: 'v-persp', label: '透视图' },
  { icon: 'v-datum', label: '基准显示', menu: true },
  { icon: 'v-annot', label: '注释显示', on: true },
  { icon: 'v-spin', label: '旋转中心', on: true },
  { icon: 'v-tri', label: '仿真' },
  { icon: 'v-pause', label: '暂停仿真' },
  { icon: 'v-play', label: '恢复' },
]

const skin = 'M1020 441C995 450 985 475 980 512 977 545 976 580 970 608 958 665 935 680 907 726 892 745 882 760 873 780 950 766 1200 741 1395 743 1360 695 1324 676 1267 641 1245 628 1225 615 1203 587 1185 560 1173 540 1170 500 1160 509 1145 521 1125 526 1105 529 1085 526 1060 512 1045 500 1022 475 1020 440z'

const markers = [
  { x: 980, y: 513 },
  { x: 1125, y: 526 },
  { x: 1171, y: 501 },
  { x: 1228, y: 748 },
]

const chainTags = [
  { n: 1, x: 1186, y: 460 },
  { n: 2, x: 1088, y: 532 },
  { n: 3, x: 1068, y: 705 },
]
</script>

<style>
html,
body { margin: 0; }
</style>

<style scoped>
.app {
  position: relative;
  display: flex;
  flex-direction: column;
  height: 100vh;
  overflow: hidden;
  font: 12px/17px "Noto Sans", "Noto Sans CJK SC", sans-serif;
  color: #414345;
  background: #f8f9fb;
}
.app * { box-sizing: border-box; }
p, h1, ul { margin: 0; padding: 0; }
svg { display: block; flex: none; }
button {
  display: flex;
  align-items: center;
  justify-content: center;
  padding: 0;
  border: 0;
  background: none;
  font: inherit;
  color: inherit;
}
input, select { font: inherit; color: inherit; outline: none; }
.sprite { position: absolute; width: 0; height: 0; }
.ico { width: 16px; height: 16px; }
.ico--12 { width: 12px; height: 12px; }

.caret {
  width: 0;
  height: 0;
  border: 4px solid transparent;
  border-bottom: 0;
  border-top-color: #4f5354;
}
.caret--off { border-top-color: #9da2a2; }
.caret--white { border-top-color: #fff; }
.caret--bar { position: relative; margin-top: 3px; border-top-color: #333; }
.caret--bar::before { content: ''; position: absolute; left: -4px; top: -7px; width: 8px; height: 1px; background: #333; }

/* title bar */
.titlebar {
  position: relative;
  display: flex;
  align-items: center;
  flex: none;
  height: 28px;
  padding-left: 12px;
  background: #dae0e0;
}
.titlebar__logo { width: 16px; height: 16px; }
.titlebar__brand { width: 51px; margin-left: 7px; font: 18px/20px Inter, sans-serif; color: #3c4142; }
.titlebar__brand sup { font-size: 7px; line-height: 1px; }
.titlebar__sep { width: 1px; height: 24px; background: #9ca3a3; }
.titlebar__sep--end { margin-left: 6px; }
.quick { gap: 5px; margin-left: 8px; }
.quick--x { margin-left: 10px; }
.quick--more { margin-left: 8px; }
.titlebar__title {
  position: absolute;
  left: 50%;
  transform: translateX(-50%);
  font-size: 13px;
  font-weight: 400;
  white-space: nowrap;
}
.titlebar__win { display: flex; gap: 15px; margin-left: auto; padding-right: 10px; }

/* ribbon tabs */
.tabs { display: flex; flex: none; height: 29px; background: #3c4445; color: #fff; font-size: 13px; }
.tabs__file { width: 66px; background: linear-gradient(160deg, #6bd845, #4ba336); }
.tabs__tab { padding: 0 23px 0 24px; }
.tabs__tab:nth-child(2) { padding-left: 23px; }
.tabs__tab--active { margin-left: 8px; padding: 0 24px 0 20px; background: #f8f9fb; color: #414345; font-size: 15px; font-style: italic; }
.tabs__right { display: flex; align-items: center; gap: 8px; margin-left: auto; padding: 0 4px 4px 0; }
.tabs__help { width: 16px; height: 16px; border-radius: 8px; background: #303536; font-size: 14px; font-weight: 700; }

/* ribbon */
.ribbon { display: flex; flex: none; height: 113px; border-bottom: 1px solid #b3babb; background: #f8f9fb; }
.ribbon__type { display: flex; align-items: center; width: 51px; margin: 2px 0; padding-left: 9px; border-right: 1px solid #a7abad; }
.ribbon__settings { display: flex; flex-direction: column; width: 526px; padding: 9px 0 0 6px; }
.ribbon__heading { font-weight: 500; line-height: 18px; margin-bottom: 1px; }
.field { display: flex; align-items: center; height: 26px; }
.field label { width: 55px; margin-left: 4px; white-space: nowrap; }
.field__input { width: 160px; height: 23px; padding: 0 6px; border: 1px solid #adb0b2; box-shadow: inset 0 0 0 1px #fff; }
.field__input--green { background: #eafadd; color: #222; }
.field__input--violet { background: #f4f0fd; }
.ribbon__panels { display: flex; margin: auto 0 0 56px; }
.panel-tab { height: 25px; padding: 0 23px 0 24px; border: 1px solid #b1b5b7; border-width: 1px 1px 0 0; background: #eff1f3; }
.panel-tab:first-child { border-left-width: 1px; padding-left: 23px; }
.ribbon__preview { display: flex; align-items: center; width: 169px; margin: 2px 0; padding-left: 22px; border: solid #a7abad; border-width: 0 1px; }
.gap-l { margin: 0 8px 0 17px; }
.mesh { width: 28px; height: 28px; margin-right: 8px; border: 1px solid #a6a9ab; background: #dedfe1; }
.ribbon__confirm { display: flex; align-items: center; width: 109px; margin: 2px 0; padding: 1px 0 0 14px; border-right: 1px solid #a7abad; }
.confirm { flex-direction: column; gap: 9px; width: 40px; height: 60px; border: 1px solid transparent; }
.confirm--ok { border-color: #66c8f8; background: #a2dfff; }
.ribbon__help { width: 274px; margin: 11px 12px 10px auto; padding: 9px 50px 0 7px; background: #dddfe1; }
.ribbon__help a { display: inline-block; margin-top: 22px; color: #1a67a0; }
.ribbon__datum { flex-direction: column; justify-content: flex-start; width: 48px; margin: 2px 0; padding: 7px 2px 0 0; border-left: 1px solid #a7abad; }
.ribbon__datum span { margin: 9px 0 23px; }

/* model tree panel */
.work { display: flex; flex: 1; min-height: 0; }
.side { flex: none; width: 273px; border-right: 3px solid #dbe0e0; background: #f8fafb; }
.side__tabs { display: flex; height: 30px; background: #dbe0e0; }
.side__tab { gap: 6px; padding-bottom: 2px; }
.side__tab--active { width: 76px; background: #f8fafb; }
.side__tab--folders { gap: 3px; width: 111px; }
.side__tab--fav { width: 76px; }
.side__head { display: flex; align-items: center; gap: 10px; height: 27px; padding-left: 28px; }
.side__head strong { flex: none; width: 115px; font-weight: 600; }
.side__head button { gap: 8px; }
.side__filter { display: flex; align-items: center; height: 30px; padding-left: 12px; }
.side__search { position: relative; width: 190px; height: 29px; margin: 0 6px 0 4px; }
.side__search input { width: 100%; height: 100%; padding: 0 20px 0 6px; border: 1px solid #a5b0b3; background: #fff; }
.side__search button { position: absolute; right: 5px; top: 9px; width: 10px; height: 12px; }
.side__filter > button { margin-left: 11px; }

.tree { padding-top: 4px; list-style: none; }
.tree__row { display: flex; align-items: center; height: 24px; color: #36383a; }
.tree__row span { margin-left: 5px; white-space: pre; }
.tree__row--l0 { margin-left: -5px; }
.tree__row--l1 { padding-left: 14px; }
.tree__row--l2 { padding-left: 34px; }
.tree__row--off { color: #bcbfc1; }
.tree__row svg + svg { margin: 0 0 5px 5px; }
.tree__row .tree__new { margin-left: 1px; }
.tree__arrow { flex: none; width: 17px; }
.tree__arrow--right::before { content: ''; display: block; width: 0; margin-left: 3px; border: 4px solid transparent; border-left: 7px solid #88898b; border-right: 0; }
.tree__arrow--down::before { content: ''; display: block; width: 0; margin-left: 2px; border: 4px solid transparent; border-top: 7px solid #88898b; border-bottom: 0; }
.tree__insert { height: 2px; margin: 7px 5px 5px 8px; background: #66c34d; }

/* graphics window */
.view { position: relative; flex: 1; min-width: 0; background: #e8eaed; }
.scene { width: 100%; height: 100%; }
.scene__csys { font-size: 15px; fill: #7d5560; }
.scene__axis { font-size: 16px; fill: #000; }
.scene__tag { font-size: 16px; fill: #37005a; text-anchor: middle; }
.scene__mode { font-size: 13px; fill: #92949f; }
.viewbar {
  position: absolute;
  top: 7px;
  left: 623px;
  display: flex;
  align-items: center;
  justify-content: space-between;
  width: 400px;
  height: 33px;
  padding: 0 3px 1px;
  border: 1px solid #9ea2a4;
  background: #f8f9fb;
}
.viewbar__btn { position: relative; width: 23px; height: 23px; border: 1px solid transparent; }
.viewbar__btn--on { border-color: #a9acae; background: #dedfe1; }
.viewbar__btn--menu::after { content: ''; position: absolute; right: -1px; bottom: 0; width: 4px; height: 4px; background: #444; clip-path: polygon(100% 0, 100% 100%, 0 100%); }
.tip {
  position: absolute;
  top: 293px;
  right: 0;
  width: 270px;
  padding: 6px 8px 7px;
  border: 1px solid #b0d6ea;
  background: #fff;
  box-shadow: 5px 2px 2px #8a8c8e;
  color: #222;
  white-space: nowrap;
}

/* network meter */
.meter { position: absolute; right: 297px; bottom: 22px; display: flex; align-items: center; width: 119px; height: 60px; }
.meter__speed {
  width: 79px;
  margin-left: 40px;
  border-radius: 0 21px 21px 0;
  background: #30343e;
  box-shadow: 0 0 4px #9a9ca3;
  color: #fff;
}
.meter__speed p { display: flex; align-items: center; height: 21px; padding-left: 22px; }
.meter__speed p + p { border-top: 1px solid #444854; }
.meter__speed b { width: 18px; margin-left: 9px; font-weight: 500; }
.meter__speed small { font-size: 11px; color: #92959c; }
.meter__dial { position: absolute; left: 0; top: 0; width: 60px; height: 60px; border: 1px solid #3d414c; border-radius: 30px; background: linear-gradient(#565b69, #4a4e5b); box-shadow: 0 0 5px #8d8f96; color: #fff; }
.meter__dial svg { position: absolute; left: -1px; top: -1px; }
.meter__dial span { display: block; padding-left: 12px; font: 300 24px/58px Roboto, sans-serif; }
.meter__dial small { font-size: 11px; font-weight: 400; }

/* status bar */
.status { display: flex; align-items: center; flex: none; height: 34px; padding-left: 6px; border-top: 1px solid #b0b9bb; background: #f6f9fa; }
.status__tree { width: 22px; height: 23px; border: 1px solid #aaadaf; background: #dedfe1; }
.status__globe { margin: 0 9px 0 7px; }
.status__full { width: 16px; height: 17px; border: 1px solid #397f9d; background: linear-gradient(#fff, #cfdfe6); }
.status__sep { width: 1px; height: 24px; margin: 0 3px 0 12px; background: #a9adaf; }
.status__msg { display: flex; gap: 1px; align-items: center; padding-bottom: 2px; font-size: 11px; }
.status__find { display: flex; width: 53px; height: 27px; margin: 0 97px 0 auto; padding: 1px 2px; border: solid #a9adaf; border-width: 0 1px; }
.status__find::before { content: ''; flex: none; width: 1px; margin: -1px 2px -1px 1px; background: #a9adaf; }
.status__find button { width: 28px; border: 1px solid #b9bcbe; background: #fafbfc; }
.status__find .status__drop { width: 15px; border-left: 0; }
.status__filter { position: relative; width: 177px; height: 25px; margin-right: 18px; }
.status__filter select { width: 100%; height: 100%; padding: 0 8px; appearance: none; border: 1px solid #a9adaf; border-radius: 0; background: #f8f9fa; }
.status__filter .caret { position: absolute; right: 5px; top: 11px; }

.taskbar { display: flex; flex: none; height: 8px; border-top: 1px solid #0d1b2c; background: linear-gradient(90deg, #2e4f7c, #1c3a66 450px, #0f1c2c 480px, #14293e 620px, #1a3050 720px, #336397 900px, #18304f 1100px, #1b426b 1500px, #17375b); overflow: hidden; }
.taskbar i { flex: none; height: 12px; }
.taskbar__orb { width: 30px; margin: 2px 0 0 12px; border-radius: 15px 15px 0 0; background: #a9bdcc; }
.taskbar__green { width: 16px; margin: 4px 0 0 34px; border-radius: 6px; background: #58d41d; }
.taskbar__tan { width: 16px; margin: 6px 0 0 57px; background: #c9b98b; }
.taskbar__white { width: 32px; margin: 3px 0 0 45px; border-radius: 6px; background: #fff; }
.taskbar__win { width: 55px; margin-left: 3px; border: 1px solid #a3afbd; background: linear-gradient(90deg, #a5b3c6, #506c92); }
.taskbar__white + .taskbar__win { margin-left: 16px; }
.taskbar__win--blue { width: 59px; background: radial-gradient(circle at 50% 14px, #1795f5 12px, #7f94b2 13px); }
.taskbar__win--light { margin-left: 9px; background: radial-gradient(circle at 50% 10px, #535b60 8px, #c3c8cd 12px); }
.taskbar__show { width: 14px; margin-left: auto; border: 1px solid #aebac8; background: #596f8d; }

/* floating upload button */
.upload { position: absolute; top: 16px; right: 229px; width: 104px; height: 25px; border: 1px solid #1d98f5; border-radius: 4px; background: linear-gradient(100deg, #e9f8fe, #bdeafd); overflow: hidden; }
.upload__icon { display: flex; align-items: center; justify-content: center; width: 30px; height: 25px; background: #22a4fb; }
.upload__text { flex: 1; padding-right: 4px; color: #5b7186; }

/* forum mark */
.mark { position: absolute; right: 14px; bottom: 6px; width: 172px; height: 80px; pointer-events: none; }
.mark__name { padding-top: 16px; font: italic 300 39px/44px "Noto Sans CJK SC", sans-serif; color: #000; white-space: nowrap; }
.mark__name span { color: #ff6633; }
.mark__flame { position: absolute; left: 66px; top: 1px; }
.mark__url { margin-top: 1px; font: italic 16px/18px "DejaVu Sans", sans-serif; color: #999; }
</style>
